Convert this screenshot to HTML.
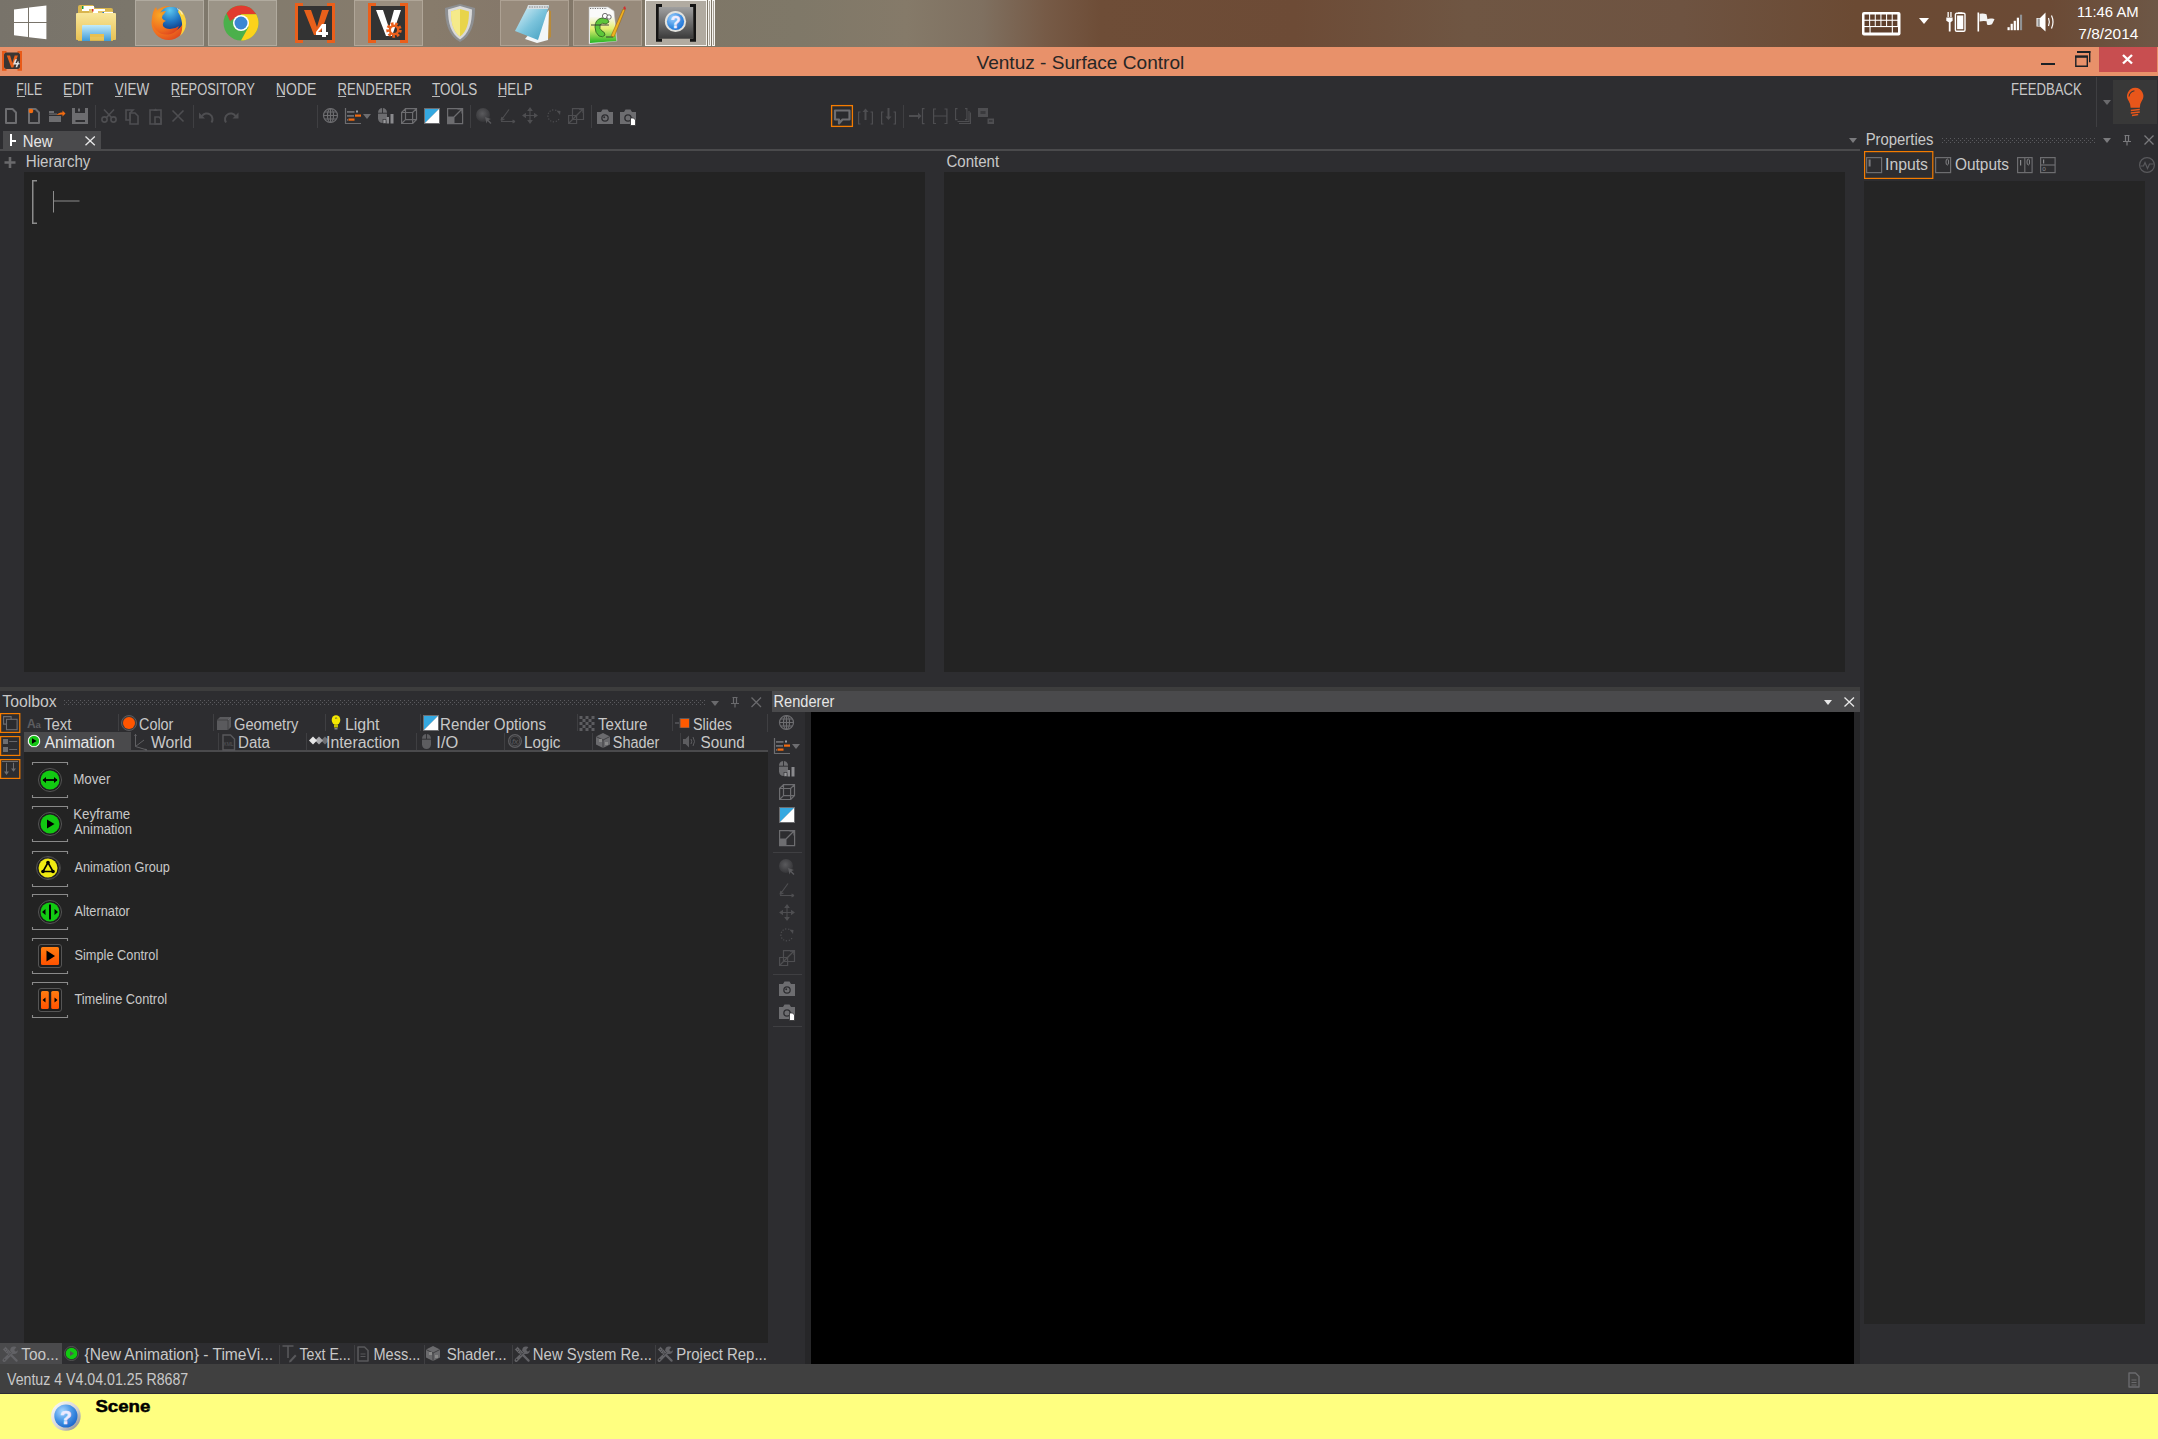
<!DOCTYPE html>
<html><head><meta charset="utf-8">
<style>
*{margin:0;padding:0;box-sizing:border-box}
html,body{width:2158px;height:1439px;overflow:hidden;background:#2d2d30;font-family:"Liberation Sans",sans-serif}
.a{position:absolute}
#ov{position:absolute;left:0;top:0}
text{font-family:"Liberation Sans",sans-serif;white-space:pre}
</style></head><body>
<div class="a" style="left:0px;top:0px;width:2158px;height:47px;background:linear-gradient(90deg,#78736a 0%,#7b766b 6%,#837b6d 13%,#877b6b 20%,#85786a 23.5%,#7e7667 31%,#7f7868 37%,#857a69 42%,#7f7060 45.5%,#765a46 48.5%,#6e4d37 51%,#6d4b36 60%,#6f5643 68%,#6e5341 78%,#6b4a33 86%,#6b4a35 95%,#6d5746 100%);"></div>
<div class="a" style="left:135px;top:0px;width:69px;height:46px;background:#9a9387;border:1px solid #b0aa9f"></div>
<div class="a" style="left:208px;top:0px;width:69px;height:46px;background:#9b9487;border:1px solid #b1ab9f"></div>
<div class="a" style="left:354px;top:0px;width:69px;height:46px;background:#9a8f80;border:1px solid #b0a698"></div>
<div class="a" style="left:500px;top:0px;width:69px;height:46px;background:#978a7b;border:1px solid #ada193"></div>
<div class="a" style="left:573px;top:0px;width:69px;height:46px;background:#978a7b;border:1px solid #ada193"></div>
<div class="a" style="left:645px;top:0px;width:62px;height:46px;background:#b1aba1;border:1.5px solid #f6f4f0"></div>
<div class="a" style="left:708px;top:0px;width:3px;height:46px;background:#a8a298;border:1px solid #f6f4f0"></div>
<div class="a" style="left:712px;top:0px;width:3px;height:46px;background:#a8a298;border:1px solid #f6f4f0"></div>
<div class="a" style="left:0px;top:47px;width:2158px;height:29px;background:#e8916a;"></div>
<div class="a" style="left:2099px;top:47px;width:58px;height:25px;background:#c84e50;"></div>
<div class="a" style="left:2041px;top:63px;width:14px;height:2px;background:#1c2126;"></div>
<div class="a" style="left:17px;top:96px;width:8px;height:1px;background:#b8b8b8;"></div>
<div class="a" style="left:64px;top:96px;width:8px;height:1px;background:#b8b8b8;"></div>
<div class="a" style="left:115px;top:96px;width:8px;height:1px;background:#b8b8b8;"></div>
<div class="a" style="left:172px;top:96px;width:8px;height:1px;background:#b8b8b8;"></div>
<div class="a" style="left:277px;top:96px;width:8px;height:1px;background:#b8b8b8;"></div>
<div class="a" style="left:338px;top:96px;width:8px;height:1px;background:#b8b8b8;"></div>
<div class="a" style="left:432px;top:96px;width:8px;height:1px;background:#b8b8b8;"></div>
<div class="a" style="left:498px;top:96px;width:8px;height:1px;background:#b8b8b8;"></div>
<div class="a" style="left:2096px;top:77px;width:1px;height:50px;background:#3f3f42;"></div>
<div class="a" style="left:2113px;top:80px;width:44px;height:44px;background:#383838;"></div>
<div class="a" style="left:95px;top:105px;width:1px;height:23px;background:#3f3f42;"></div>
<div class="a" style="left:193px;top:105px;width:1px;height:23px;background:#3f3f42;"></div>
<div class="a" style="left:317px;top:105px;width:1px;height:23px;background:#3f3f42;"></div>
<div class="a" style="left:470px;top:105px;width:1px;height:23px;background:#3f3f42;"></div>
<div class="a" style="left:591px;top:105px;width:1px;height:23px;background:#3f3f42;"></div>
<div class="a" style="left:903px;top:105px;width:1px;height:23px;background:#3f3f42;"></div>
<div class="a" style="left:3px;top:131px;width:98px;height:18px;background:#4a4a4c;"></div>
<div class="a" style="left:0px;top:149px;width:1860px;height:2px;background:#4a4a4c;"></div>
<div class="a" style="left:10px;top:134px;width:2px;height:12px;background:#ffffff;"></div>
<div class="a" style="left:12px;top:139.5px;width:4px;height:2px;background:#ffffff;"></div>
<div class="a" style="left:24px;top:172px;width:901px;height:500px;background:#232323;"></div>
<div class="a" style="left:944px;top:172px;width:901px;height:500px;background:#232323;"></div>
<div class="a" style="left:1864px;top:181px;width:281px;height:1143px;background:#252525;"></div>
<div class="a" style="left:0px;top:687px;width:1860px;height:4px;background:#3d3d3d;"></div>
<div class="a" style="left:24px;top:732px;width:106.6px;height:18px;background:#4a4a4c;"></div>
<div class="a" style="left:24px;top:750px;width:744px;height:2px;background:#4a4a4c;"></div>
<div class="a" style="left:118px;top:714px;width:1px;height:17px;background:#3f3f42;"></div>
<div class="a" style="left:213px;top:714px;width:1px;height:17px;background:#3f3f42;"></div>
<div class="a" style="left:325px;top:714px;width:1px;height:17px;background:#3f3f42;"></div>
<div class="a" style="left:420px;top:714px;width:1px;height:17px;background:#3f3f42;"></div>
<div class="a" style="left:577px;top:714px;width:1px;height:17px;background:#3f3f42;"></div>
<div class="a" style="left:672px;top:714px;width:1px;height:17px;background:#3f3f42;"></div>
<div class="a" style="left:767px;top:714px;width:1px;height:18px;background:#3f3f42;"></div>
<div class="a" style="left:218px;top:733px;width:1px;height:17px;background:#3f3f42;"></div>
<div class="a" style="left:306px;top:733px;width:1px;height:17px;background:#3f3f42;"></div>
<div class="a" style="left:416px;top:733px;width:1px;height:17px;background:#3f3f42;"></div>
<div class="a" style="left:504px;top:733px;width:1px;height:17px;background:#3f3f42;"></div>
<div class="a" style="left:592px;top:733px;width:1px;height:17px;background:#3f3f42;"></div>
<div class="a" style="left:680px;top:733px;width:1px;height:17px;background:#3f3f42;"></div>
<div class="a" style="left:24px;top:752px;width:744px;height:591px;background:#232323;"></div>
<div class="a" style="left:772px;top:691px;width:1088px;height:21px;background:#4a4a4c;"></div>
<div class="a" style="left:805px;top:712px;width:6px;height:652px;background:#262628;"></div>
<div class="a" style="left:811px;top:712px;width:1043px;height:652px;background:#000000;"></div>
<div class="a" style="left:1854px;top:712px;width:6px;height:652px;background:#262628;"></div>
<div class="a" style="left:773px;top:852px;width:29px;height:1px;background:#3f3f42;"></div>
<div class="a" style="left:773px;top:974px;width:29px;height:1px;background:#3f3f42;"></div>
<div class="a" style="left:773px;top:1026px;width:29px;height:1px;background:#3f3f42;"></div>
<div class="a" style="left:767px;top:714px;width:1px;height:18px;background:#3f3f42;"></div>
<div class="a" style="left:0px;top:1343px;width:62px;height:21px;background:#4a4a4c;"></div>
<div class="a" style="left:279px;top:1345px;width:1px;height:19px;background:#3f3f42;"></div>
<div class="a" style="left:354px;top:1345px;width:1px;height:19px;background:#3f3f42;"></div>
<div class="a" style="left:424px;top:1345px;width:1px;height:19px;background:#3f3f42;"></div>
<div class="a" style="left:512px;top:1345px;width:1px;height:19px;background:#3f3f42;"></div>
<div class="a" style="left:655px;top:1345px;width:1px;height:19px;background:#3f3f42;"></div>
<div class="a" style="left:0px;top:1364px;width:2158px;height:29px;background:#404040;"></div>
<div class="a" style="left:0px;top:1393px;width:2158px;height:1px;background:#2c2c32;"></div>
<div class="a" style="left:0px;top:1394px;width:2158px;height:45px;background:#ffff80;"></div>
<svg id="ov" width="2158" height="1439" viewBox="0 0 2158 1439">
<path fill="#fff" d="M14 9.5L28 7.8V22H14z M29 7.6L46.4 5.6V22H29z M14 23H28V37L14 35.3z M29 23H46.4V39.2L29 37.2z"/>
<g transform="translate(76,3)"><defs><linearGradient id="fold" x1="0" y1="0" x2="0" y2="1"><stop offset="0" stop-color="#f8e69a"/><stop offset="1" stop-color="#e8c255"/></linearGradient><linearGradient id="stand" x1="0" y1="0" x2="0" y2="1"><stop offset="0" stop-color="#c3ecfb"/><stop offset="1" stop-color="#3e9ad8"/></linearGradient></defs><path fill="#d9b54e" d="M2 4q0-2 2-2h13l2 3h16q2 0 2 2v31H2z"/><path fill="#fff" d="M6 3h12v5H6z"/><rect x="6" y="3" width="1.5" height="3" fill="#1d9a3a"/><path fill="#e3c464" d="M13 6h14l1 2h8v5H13z"/><path fill="#fff" d="M17 6h12v4H17z"/><rect x="16" y="6" width="1.5" height="2.5" fill="#d83020"/><path fill="#e3c464" d="M22 8h10l1 2h4v5H22z"/><path fill="#fff" d="M27 9h10v3H27z"/><rect x="26.5" y="9" width="1.5" height="2.5" fill="#2070d0"/><path fill="url(#fold)" d="M1 10h38q1 0 1 1v25q0 1-1 1H1q-1 0-1-1V11q0-1 1-1z"/><path fill="url(#stand)" d="M6 23q0-1 1-1h27q1 0 1 1v15H28v-5H14v5H6z"/><rect x="14" y="31" width="14" height="3" fill="#e8c050"/></g>
<g transform="translate(150,4)"><defs><radialGradient id="ffo" cx="0.3" cy="0.3" r="0.9"><stop offset="0" stop-color="#f9a825"/><stop offset="0.6" stop-color="#ef6c1e"/><stop offset="1" stop-color="#d9381e"/></radialGradient><radialGradient id="ffb" cx="0.45" cy="0.15" r="0.9"><stop offset="0" stop-color="#5cc8f0"/><stop offset="0.5" stop-color="#2277c4"/><stop offset="1" stop-color="#0c2e78"/></radialGradient></defs><circle cx="18.5" cy="19" r="17" fill="url(#ffo)"/><circle cx="21" cy="15" r="12.5" fill="url(#ffb)"/><path fill="url(#ffo)" d="M2 16q0-9 4-13 1 4 3 6 3-2 7-2l-2 3q-2 1-2 4 1 2 4 3-4 1-3 5 2 3 7 3 5 0 9-3-2 6-8 8-9 2-14-3-5-4-5-11z"/><path fill="#fcd33a" d="M29 5q7 5 7 14 0 8-6 13 3-6 2-13-1-7-4-11z"/><path fill="#fff" opacity="0.6" d="M27 4q4 2 6 6l-1 1q-2-4-5-6z"/></g>
<g transform="translate(222,4)"><circle cx="19" cy="19" r="17.5" fill="#4bb04b"/><path fill="#e23a2f" d="M19 1.5A17.5 17.5 0 0 1 34.2 10.3L19 10.3 8 17 4.6 9.3A17.5 17.5 0 0 1 19 1.5z"/><path fill="#fcd21b" d="M34.2 10.3A17.5 17.5 0 0 1 19 36.5L26.5 23 19 10.3z"/><circle cx="19" cy="19" r="8" fill="#fff"/><circle cx="19" cy="19" r="6.5" fill="#3c86d2"/></g>
<g transform="translate(294,2)"><rect x="3" y="4" width="36" height="34" fill="#333"/><path fill="#ea5f1b" d="M1 1h8v3H4v34h5v3H1z M41 1h-8v3h5v34h-5v3h8z"/><path fill="#e8601b" d="M10 8h7l6 17 5-17h7L26 33h-6z"/><path fill="#fff" d="M28 22h4v8h2v3h-2v2h-4v-2h-6v-3z M24 30h4v-4z"/></g>
<g transform="translate(367,2)"><rect x="3" y="4" width="36" height="34" fill="#333"/><path fill="#ea5f1b" d="M1 1h8v3H4v34h5v3H1z M41 1h-8v3h5v34h-5v3h8z"/><path fill="#fff" d="M9 8h7l6 18 5-18h7L25 34h-6z"/><circle cx="27" cy="28" r="6" fill="none" stroke="#ea5f1b" stroke-width="3.5" stroke-dasharray="2.5 1.6"/><circle cx="27" cy="28" r="4.2" fill="none" stroke="#ea5f1b" stroke-width="2.4"/></g>
<g transform="translate(443,2)"><path fill="#8d8f92" d="M17 2l15 4c0 16-4 28-15 34C6 34 2 22 2 6z"/><path fill="#d9d9d9" d="M17 4l12 3.5c0 14-3 24-12 30C8 31.5 5 21.5 5 7.5z"/><path fill="#e8d44a" d="M17 7l9 2.5c0 11-2 20-9 25C10 29.5 8 20.5 8 9.5z"/><path fill="#f5ea8a" d="M17 7v27.5C10 29.5 8 20.5 8 9.5z"/></g>
<g transform="translate(514,4)"><defs><linearGradient id="npb" x1="0" y1="0" x2="1" y2="1"><stop offset="0" stop-color="#e6f6fb"/><stop offset="0.5" stop-color="#7cc4dc"/><stop offset="1" stop-color="#3d9bbd"/></linearGradient></defs><path fill="#b88a3a" d="M34 6l3 1 0 26-3 2z"/><path fill="#f2f6f8" d="M35 6l-1 30-11 3 -12-4z"/><path fill="url(#npb)" d="M14 2h21L24 36 1 27z"/><path fill="#d8dde0" d="M14 1h21l-1 4H13z"/><path stroke="#777" stroke-width="0.8" d="M15 3h19" stroke-dasharray="1.5 1"/></g>
<g transform="translate(588,5)"><defs><linearGradient id="npp" x1="0" y1="0" x2="0" y2="1"><stop offset="0" stop-color="#f8f8f0"/><stop offset="0.45" stop-color="#e4ef70"/><stop offset="1" stop-color="#22b522"/></linearGradient></defs><path fill="#fafafa" stroke="#bbb" stroke-width="0.6" d="M1 2h19l6 4 3 30-28 3z"/><path fill="url(#npp)" d="M2 12h24l2.5 24L2 38z"/><path stroke="#666" stroke-width="0.9" stroke-dasharray="1.2 1.2" d="M2 3.5h17"/><path fill="#5cc63a" stroke="#2d5a1e" stroke-width="0.8" d="M7 22q0-8 7-9 6 0 7 4l-3 2q-4-2-6 1-1 4 2 6 3 1 3 4-2 3-6 1-4-3-4-9z"/><circle cx="17" cy="11" r="2.6" fill="#fff" stroke="#333" stroke-width="0.7"/><circle cx="21" cy="12" r="2.2" fill="#fff" stroke="#333" stroke-width="0.7"/><path stroke="#333" stroke-width="0.9" d="M3 20h18M18 32h7"/><path fill="#f0b020" stroke="#8a5a10" stroke-width="0.5" d="M23 31L35 4l2 1-11 27z"/><path fill="#d03030" d="M35 3l2-2 1 3-1 1z"/></g>
<g transform="translate(656,4)"><defs><linearGradient id="hg" x1="0" y1="0" x2="0" y2="1"><stop offset="0" stop-color="#a0a0a0"/><stop offset="1" stop-color="#3a3a3a"/></linearGradient><radialGradient id="hb" cx="0.35" cy="0.3" r="0.8"><stop offset="0" stop-color="#9fd0ff"/><stop offset="0.6" stop-color="#3f90e2"/><stop offset="1" stop-color="#1a6ed8"/></radialGradient></defs><rect x="3" y="3" width="34" height="31.7" fill="url(#hg)"/><path fill="#141414" d="M0 0h6v3H2.8v31.7H6v3H0z M40 0h-6v3h3.2v31.7H34v3h6z"/><circle cx="19.5" cy="17.5" r="10.6" fill="#e2e2de"/><circle cx="19.5" cy="17.5" r="8.6" fill="url(#hb)"/><text x="19.6" y="24" font-size="16" font-weight="bold" fill="#f0eeff" text-anchor="middle" stroke="#f0eeff" stroke-width="0.5">?</text></g>
<g transform="translate(1862,12)"><rect x="0" y="0" width="38.5" height="23.5" rx="2" fill="#fff"/><g fill="#5e3f2c"><rect x="2.50" y="2.50" width="4.6" height="5.2"/><rect x="2.50" y="8.80" width="4.6" height="5.2"/><rect x="8.15" y="2.50" width="4.6" height="5.2"/><rect x="8.15" y="8.80" width="4.6" height="5.2"/><rect x="13.80" y="2.50" width="4.6" height="5.2"/><rect x="13.80" y="8.80" width="4.6" height="5.2"/><rect x="19.45" y="2.50" width="4.6" height="5.2"/><rect x="19.45" y="8.80" width="4.6" height="5.2"/><rect x="25.10" y="2.50" width="4.6" height="5.2"/><rect x="25.10" y="8.80" width="4.6" height="5.2"/><rect x="30.75" y="2.50" width="4.6" height="5.2"/><rect x="30.75" y="8.80" width="4.6" height="5.2"/><rect x="2.5" y="15.1" width="5" height="5.4"/><rect x="8.6" y="15.1" width="21.2" height="5.4"/><rect x="30.9" y="15.1" width="5.1" height="5.4"/></g></g>
<g transform="translate(1919,18)"><path d="M0 0h10L5 6z" fill="#fff"/></g>
<g transform="translate(1946,12)"><path fill="#fff" d="M1.5 0h1.3v5H1.5z M4.3 0h1.3v5H4.3z M0.3 5.5h6.3v3.3l-2 1.5V19.5H2.8V10.3L0.3 8.8z"/><rect x="9.4" y="1.3" width="9.6" height="18" rx="1.3" fill="none" stroke="#fff" stroke-width="1.4"/><rect x="11.1" y="3.5" width="6.2" height="13.7" fill="#fff"/><rect x="12" y="0.3" width="4.4" height="1.2" fill="#fff"/></g>
<g transform="translate(1977,12)"><rect x="0.5" y="0.5" width="1.6" height="19" fill="#fff"/><path fill="#f2f2f2" d="M2.6 1.8Q6 0.8 9.5 2.2L10.5 7.2Q11.5 6.4 15.2 6.6Q16.6 6.9 17.5 7.2Q15.5 11.2 15 12.3Q12 13.5 10 12.4L9.6 9.2Q6 8.4 2.6 9.6z"/></g>
<g transform="translate(2007,14)"><g fill="#fff"><rect x="0.5" y="13.2" width="2.2" height="3"/><rect x="3.6" y="9.8" width="2.2" height="6.4"/><rect x="6.7" y="6.8" width="2.2" height="9.4"/><rect x="9.8" y="3.7" width="2.2" height="12.5"/></g><rect x="12.9" y="0.7" width="2.2" height="15.5" fill="#909294"/></g>
<g transform="translate(2036,12)"><path fill="#fff" d="M0.5 6h3.5l5.5-5.5v19l-5.5-5H0.5z"/><rect x="1.5" y="6.5" width="2.3" height="7.5" fill="#999"/><path d="M12.5 6q1.7 4 0 8 M15.5 3.5q3 6.5 0 13" fill="none" stroke="#fff" stroke-width="1.2"/></g>
<g transform="translate(0,46)"><path fill="#e85a18" d="M2 5h4.5v2H4v15.8h2.5v2H2z M22 5h-4.5v2H20v15.8h-2.5v2H22z"/><rect x="4" y="6.5" width="16" height="16.5" rx="2.5" fill="#3b3533"/><path fill="#e8601b" d="M6.8 9.5h3.3l2.2 7.5 2.4-7.5h3.2l-4.6 12h-2z"/><path fill="#e0e0e0" d="M15 13.5l2-0.5-1.5 4h1.5l0.5-1.5h1.5l-0.5 1.5h1v1.6h-1.4l-0.9 2.6h-1.6l0.9-2.6H13z"/></g>
<g transform="translate(2122,54)"><path d="M1 1L10 9.5M10 1L1 9.5" stroke="#fff" stroke-width="2.4"/></g>
<g transform="translate(2075,51)"><path d="M0.8 5.5h11.5v9.7H0.8z" fill="none" stroke="#1c2126" stroke-width="1.4"/><rect x="0" y="4.5" width="13" height="2.2" fill="#1c2126"/><path d="M2.5 0.8h12.2v10.5" fill="none" stroke="#1c2126" stroke-width="1.4"/><rect x="2" y="0" width="13.4" height="2" fill="#1c2126"/></g>
<g transform="translate(2103,100)"><path d="M0 0h8L4 5z" fill="#6a6a6d"/></g>
<g transform="translate(2125,87)"><path fill="#e8561a" d="M10.2 0.8A8.4 8.4 0 0 1 16.6 14.3Q15 16.5 14.8 20.8H5.6Q5.4 16.5 3.8 14.3A8.4 8.4 0 0 1 10.2 0.8z"/><path d="M4 9.5Q4.6 5 9.4 3.8" stroke="#383838" stroke-width="1.1" fill="none"/><path d="M5.8 23.6L14.8 22.6M5.8 26L14.8 25M7 28.4L13.2 27.6" stroke="#e8561a" stroke-width="1.5"/></g>
<g transform="translate(5,108)"><path d="M1 1h6.5L11 4.5V15H1z" fill="none" stroke="#6d6d70" stroke-width="2" stroke-linejoin="round"/></g>
<g transform="translate(28,108)"><path d="M1 1h6.5L11 4.5V15H1z" fill="none" stroke="#6d6d70" stroke-width="2" stroke-linejoin="round"/><circle cx="3" cy="3" r="2.3" fill="#f26b10"/></g>
<g transform="translate(49,108)"><rect x="0" y="3" width="5" height="2" fill="#6d6d70"/><rect x="0" y="5.5" width="8" height="1.2" fill="#6d6d70"/><rect x="0" y="8" width="12" height="6" fill="#6d6d70"/><path d="M7.5 7c2-2 4-2.5 6-2.5V2.5l3 3-3 3V6.5c-2 0-4 0.5-6 0.5z" fill="#f26b10"/></g>
<g transform="translate(72,108)"><path d="M0 0h16v16H0z" fill="#6d6d70"/><rect x="3" y="0" width="10" height="5" fill="#2d2d30"/><rect x="6" y="0.5" width="2" height="3" fill="#6d6d70"/><rect x="3.5" y="12" width="9.5" height="2" fill="#2d2d30"/></g>
<g transform="translate(101,109)"><g fill="none" stroke="#4e4e51" stroke-width="1.6"><circle cx="3.5" cy="10.5" r="2.6"/><circle cx="12.5" cy="10.5" r="2.6"/><path d="M5.5 8.5L13 0.5M10.5 8.5L3 0.5"/></g></g>
<g transform="translate(125,108)"><g fill="none" stroke="#4e4e51" stroke-width="1.6"><path d="M1 3v9h4V5l3-3H1z"/><path d="M5 5h5l3 3v8H5z"/></g></g>
<g transform="translate(149,108)"><g fill="none" stroke="#4e4e51" stroke-width="1.6"><path d="M1 2h11v14H1z"/><path d="M6 9h4l2 2v5H6z"/></g><path d="M4 3l2.5-2.5L9 3z" fill="#4e4e51"/></g>
<g transform="translate(172,110)"><path d="M0.5 0.5L11.5 11.5M11.5 0.5L0.5 11.5" stroke="#4e4e51" stroke-width="1.6"/></g>
<g transform="translate(199,110)"><path d="M3 6A5.5 5.5 0 1 1 12.5 12.5" fill="none" stroke="#4e4e51" stroke-width="2"/><path d="M0 2.5v6h6z" fill="#4e4e51"/></g>
<g transform="translate(223,110)"><path d="M12.5 6A5.5 5.5 0 1 0 3 12.5" fill="none" stroke="#4e4e51" stroke-width="2"/><path d="M15.5 2.5v6h-6z" fill="#4e4e51"/></g>
<g transform="translate(323,108)"><g fill="none" stroke="#6d6d70" stroke-width="1.2"><circle cx="7.5" cy="7.5" r="7"/><ellipse cx="7.5" cy="7.5" rx="3" ry="7"/><path d="M7.5 0.5v14M0.5 7.5h14M1.5 4h12M1.5 11h12"/></g></g>
<g transform="translate(345,108)"><path d="M0.5 0v15.5H16" fill="none" stroke="#6d6d70" stroke-width="1.2"/><rect x="2" y="3" width="7.5" height="1.8" fill="#6d6d70"/><rect x="11" y="2.5" width="2" height="2" fill="#9a9a9d"/><rect x="2" y="7" width="7" height="1.8" fill="#6d6d70"/><rect x="10" y="6.5" width="6" height="2.2" fill="#f26b10"/><rect x="2" y="11" width="1" height="1.8" fill="#6d6d70"/><rect x="3.5" y="10.5" width="6" height="2.2" fill="#f26b10"/><path d="M18 6h8l-4 5z" fill="#6d6d70"/></g>
<g transform="translate(378,108)"><path d="M4.5 0C2 0 0 2 0 4.5V10.5C0 13 2 15 4.5 15S9 13 9 10.5V4.5C9 2 7 0 4.5 0z" fill="#6d6d70"/><path d="M4.5 0v5M0 5.2h9" stroke="#2d2d30" stroke-width="0.9"/><rect x="5" y="11.5" width="3" height="4" fill="#9a9a9d" stroke="#2d2d30" stroke-width="0.6"/><rect x="8.5" y="9" width="2.5" height="6.5" fill="#8a8a8d"/><rect x="12.5" y="6" width="3" height="9.5" fill="#8a8a8d"/></g>
<g transform="translate(401,108)"><g fill="none" stroke="#6d6d70" stroke-width="1.2"><path d="M0.6 4.5h11v11H0.6z M4.5 0.6h11v11h-11z M0.6 4.5L4.5 0.6M11.6 4.5L15.5 0.6M0.6 15.5L4.5 11.6M11.6 15.5L15.5 11.6"/></g></g>
<g transform="translate(424,108)"><rect x="0" y="0" width="16" height="16" fill="#6d6d70"/><path d="M1 1h14L1 15z" fill="#35a8e0"/><path d="M15 1v14H1z" fill="#fff"/></g>
<g transform="translate(447,108)"><path d="M0.6 0.6h15v15h-15z" fill="none" stroke="#6d6d70" stroke-width="1.2"/><rect x="0" y="8.5" width="7.5" height="7.5" fill="#6d6d70"/><path d="M7 9L15 1M10.5 1H15v4.5" fill="none" stroke="#6d6d70" stroke-width="1.2"/></g>
<g transform="translate(476,108)"><defs><radialGradient id="sph" cx="0.45" cy="0.4" r="0.6"><stop offset="0" stop-color="#5a5a5d"/><stop offset="1" stop-color="#353538"/></radialGradient></defs><circle cx="7" cy="7" r="7" fill="url(#sph)"/><path d="M9 9l6 2-2.5 1 3 3-1 1-3-3-1 2.5z" fill="#5a5a5d"/></g>
<g transform="translate(500,109)"><path d="M1 11.5L9 0.5M1 12.5h14M1 11.5l1-3.5M1 11.5l3.5-1.5M15 12.5l-2.5-1.5M15 12.5l-2.5 1.5" fill="none" stroke="#4e4e51" stroke-width="1.2"/></g>
<g transform="translate(523,108)"><path d="M7 0v15M0 7.5h14M7 0l-1.8 2.5h3.6zM7 15l-1.8-2.5h3.6zM0 7.5l2.5-1.8v3.6zM14 7.5l-2.5-1.8v3.6z" fill="#4e4e51" stroke="#4e4e51" stroke-width="1.1"/></g>
<g transform="translate(546,109)"><path d="M12.5 3A6 6 0 1 0 13 10" fill="none" stroke="#4e4e51" stroke-width="1.2" stroke-dasharray="1.2 1.6"/><path d="M10.5 1.5l4 0.5-0.5 4z" fill="#4e4e51"/></g>
<g transform="translate(568,108)"><path d="M4.5 0.6H15.5V11.5H4.5z" fill="none" stroke="#4e4e51" stroke-width="1.2"/><path d="M0.6 7.5h8v8h-8z" fill="none" stroke="#4e4e51" stroke-width="1.2"/><path d="M1 15L15 1M11 1h4v4" fill="none" stroke="#4e4e51" stroke-width="1.3"/></g>
<g transform="translate(597,109)"><path d="M0 3h4l1.5-2.5h5L12 3h4v12H0z" fill="#6d6d70"/><circle cx="8" cy="9" r="3.8" fill="#2d2d30"/><circle cx="8" cy="9" r="2.5" fill="#6d6d70"/><circle cx="7.2" cy="8.2" r="1" fill="#2d2d30"/></g>
<g transform="translate(620,109)"><path d="M0 3h4l1.5-2.5h5L12 3h4v12H0z" fill="#6d6d70"/><circle cx="8" cy="9" r="3.8" fill="#2d2d30"/><circle cx="8" cy="9" r="2.5" fill="#6d6d70"/><path d="M10.5 9h3l2 2v5.5h-5z" fill="#fff" stroke="#2d2d30" stroke-width="0.8"/></g>
<g transform="translate(831,105)"><rect x="0.6" y="0.6" width="20.8" height="20.8" fill="#2a2b2e" stroke="#f57c00" stroke-width="1.3"/></g>
<g transform="translate(834,110)"><path d="M1 0.5h14.5v9H8.5L5 13.5V9.5H1z" fill="none" stroke="#6d6d70" stroke-width="2.2" stroke-linejoin="round"/></g>
<g transform="translate(858,108)"><path d="M2.5 4H0.6v12H2.5M12.5 4h1.9v12h-1.9" fill="none" stroke="#4e4e51" stroke-width="1.2"/><rect x="6.5" y="3" width="2" height="9" fill="#4e4e51"/><path d="M4.5 4L7.5 0.5 10.5 4z" fill="#4e4e51"/></g>
<g transform="translate(881,108)"><path d="M2.5 4H0.6v12H2.5M12.5 4h1.9v12h-1.9" fill="none" stroke="#4e4e51" stroke-width="1.2"/><rect x="6.5" y="0" width="2" height="9" fill="#4e4e51"/><path d="M4.5 8.5L7.5 12 10.5 8.5z" fill="#4e4e51"/></g>
<g transform="translate(909,108)"><rect x="0" y="7" width="10" height="2" fill="#4e4e51"/><path d="M9 4.5l3.5 3.5L9 11.5z" fill="#4e4e51"/><path d="M15.5 0.6h-2v15h2" fill="none" stroke="#4e4e51" stroke-width="1.2"/></g>
<g transform="translate(933,108)"><path d="M3 1H0.6v14.5H3M11.5 1h2.4v14.5h-2.4M0.6 8h13.3" fill="none" stroke="#4e4e51" stroke-width="1.2"/></g>
<g transform="translate(955,108)"><path d="M2.5 0.6H0.6v11H2.5M10 0.6h1.9v11H10M2.5 13.5h11.5V3M4 15.5h11.5V4.5" fill="none" stroke="#4e4e51" stroke-width="1.1"/></g>
<g transform="translate(978,108)"><rect x="0" y="0" width="10" height="9" fill="#4e4e51"/><rect x="2.5" y="3" width="5" height="3" fill="#2d2d30" opacity="0.6"/><rect x="9.5" y="10.5" width="6.5" height="5.5" fill="#4e4e51"/><rect x="11" y="12" width="3.5" height="2" fill="#2d2d30" opacity="0.6"/></g>
<g transform="translate(85,136)"><path d="M0.5 0.5L9.8 9.3M9.8 0.5L0.5 9.3" stroke="#e8e8e8" stroke-width="1.3"/></g>
<g transform="translate(1849,138)"><path d="M0 0h8L4 5z" fill="#7a7a7d"/></g>
<g transform="translate(4,157)"><path d="M6 0v11M0.5 5.5h11" stroke="#6a6a6c" stroke-width="2.6"/></g>
<g transform="translate(32,180)"><path d="M5 0.75H0.75V43.25H5" fill="none" stroke="#8c8c8c" stroke-width="1.5"/><path d="M21.5 11v21.5M21.5 21h26" fill="none" stroke="#8c8c8c" stroke-width="1"/></g>
<defs><pattern id="dots" width="4" height="4" patternUnits="userSpaceOnUse"><rect x="0" y="0" width="1" height="1" fill="#5a5a5e"/><rect x="2" y="2" width="1" height="1" fill="#5a5a5e"/></pattern></defs>
<rect x="1942" y="138" width="153" height="5" fill="url(#dots)"/>
<g transform="translate(2103,138)"><path d="M0 0h8L4 5z" fill="#7a7a7d"/></g>
<g transform="translate(2123,135)"><path d="M1.5 0.5h5M2.5 0.5v6M5.5 0.5v6M0 6.5h8M4 6.5v4" stroke="#7a7a7d" stroke-width="1.2" fill="none"/></g>
<g transform="translate(2144,135)"><path d="M0.5 0.5L9.5 9.5M9.5 0.5L0.5 9.5" stroke="#7a7a7d" stroke-width="1.3"/></g>
<g transform="translate(1864,151)"><rect x="0.6" y="0.6" width="68.2" height="26.8" fill="none" stroke="#f57c00" stroke-width="1.2"/></g>
<g transform="translate(1866,157)"><rect x="0.6" y="0.6" width="15" height="15" fill="none" stroke="#6d6d70" stroke-width="1.2"/><rect x="2.6" y="2.5" width="2" height="7" fill="#7a7a7d"/></g>
<g transform="translate(1935,157)"><rect x="0.6" y="0.6" width="15" height="15" fill="none" stroke="#6d6d70" stroke-width="1.2"/><ellipse cx="12.3" cy="5" rx="1.3" ry="3" fill="none" stroke="#8a8a8d" stroke-width="0.9"/></g>
<g transform="translate(2017,157)"><rect x="0.6" y="0.6" width="14.5" height="15" fill="none" stroke="#6d6d70" stroke-width="1.2"/><path d="M7.8 0.6v15" stroke="#6d6d70" stroke-width="1.2"/><rect x="3" y="3" width="1.2" height="5.5" fill="#8a8a8d"/><ellipse cx="11.3" cy="5" rx="1.3" ry="3" fill="none" stroke="#8a8a8d" stroke-width="0.9"/></g>
<g transform="translate(2040,157)"><rect x="0.6" y="0.6" width="14.5" height="15" fill="none" stroke="#6d6d70" stroke-width="1.2"/><path d="M0.6 8h14.5" stroke="#6d6d70" stroke-width="1.2"/><rect x="3" y="2.5" width="1.2" height="4" fill="#8a8a8d"/><text x="4" y="14" font-size="6.5" fill="#8a8a8d" text-anchor="middle">o</text></g>
<g transform="translate(2139,157)"><circle cx="8" cy="8" r="7.4" fill="none" stroke="#5a5a5d" stroke-width="1.2"/><path d="M1.5 9h3l1.5-3.5 2.5 6 2-4.5h4" fill="none" stroke="#5a5a5d" stroke-width="1.2"/></g>
<rect x="64" y="699" width="642" height="6" fill="url(#dots)"/>
<g transform="translate(711,701)"><path d="M0 0h8L4 5z" fill="#6a6a6d"/></g>
<g transform="translate(731,697)"><path d="M1.5 0.5h5M2.5 0.5v6M5.5 0.5v6M0 6.5h8M4 6.5v4" stroke="#6a6a6d" stroke-width="1.2" fill="none"/></g>
<g transform="translate(751,697)"><path d="M0.5 0.5L10 10M10 0.5L0.5 10" stroke="#6a6a6d" stroke-width="1.3"/></g>
<g transform="translate(0,713)"><rect x="0.6" y="0.6" width="19.2" height="18.8" fill="none" stroke="#f57c00" stroke-width="1.2"/></g>
<g transform="translate(0,736)"><rect x="0.6" y="0.6" width="19.2" height="18.8" fill="none" stroke="#f57c00" stroke-width="1.2"/></g>
<g transform="translate(0,759)"><rect x="0.6" y="0.6" width="19.2" height="18.8" fill="none" stroke="#f57c00" stroke-width="1.2"/></g>
<g transform="translate(3,716)"><path d="M0.6 0.6h7.5v7.5h-7.5z" fill="none" stroke="#6d6d70" stroke-width="1.1"/><rect x="3.5" y="3.3" width="10.6" height="10.4" fill="#2a2b2e" stroke="#6d6d70" stroke-width="1.1"/></g>
<g transform="translate(3,739)"><rect x="0" y="0" width="5" height="5" fill="#6d6d70"/><rect x="0" y="8" width="5" height="5" fill="#6d6d70"/><path d="M6.2 2.5h8M6.2 10.5h8" stroke="#6d6d70" stroke-width="0.9"/></g>
<g transform="translate(2,761)"><path d="M0 0.5h16M4.5 1.8v10M11.5 1.8v7" stroke="#6d6d70" stroke-width="1"/><path d="M2 10.5l2.5 3.5 2.5-3.5zM9 7.5l2.5 3.2 2.5-3.2z" fill="#6d6d70"/></g>
<g transform="translate(27,719)"><text x="0" y="9.3" font-size="12" font-weight="bold" fill="#5e5e61">A</text><text x="8.6" y="9.3" font-size="9.5" font-weight="bold" fill="#5e5e61">a</text></g>
<g transform="translate(121,715)"><circle cx="8" cy="8" r="7.5" fill="#3a3a3c" stroke="#5a5a5d" stroke-width="1"/><circle cx="8" cy="8" r="6" fill="#ff5500"/></g>
<g transform="translate(217,716)"><path d="M0 4l3-3h11v10l-3 3H0z" fill="#5a5a5d"/><path d="M0 4h11v10" fill="none" stroke="#3a3a3c" stroke-width="0.8"/><path d="M11 4l3-3" stroke="#6a6a6d" stroke-width="0.8"/></g>
<g transform="translate(331,715)"><ellipse cx="5" cy="5" rx="4.3" ry="4.8" fill="#f5e800"/><path d="M3 9.5h4v3H3z" fill="#c8c000"/><path d="M3.5 13h3v1.5h-3z" fill="#888"/><path d="M4 3.5q1-1.5 2.2 0" stroke="#444" stroke-width="0.8" fill="none"/></g>
<g transform="translate(423,715)"><rect x="0" y="0" width="16" height="16" fill="#6d6d70"/><path d="M1 1h14L1 15z" fill="#35a8e0"/><path d="M15 1v14H1z" fill="#fff"/></g>
<g fill="#5d5d60"><rect x="579.5" y="716" width="3" height="3"/><rect x="579.5" y="722" width="3" height="3"/><rect x="579.5" y="728" width="3" height="3"/><rect x="582.5" y="719" width="3" height="3"/><rect x="582.5" y="725" width="3" height="3"/><rect x="585.5" y="716" width="3" height="3"/><rect x="585.5" y="722" width="3" height="3"/><rect x="585.5" y="728" width="3" height="3"/><rect x="588.5" y="719" width="3" height="3"/><rect x="588.5" y="725" width="3" height="3"/><rect x="591.5" y="716" width="3" height="3"/><rect x="591.5" y="722" width="3" height="3"/><rect x="591.5" y="728" width="3" height="3"/></g>
<g transform="translate(675,716)"><path d="M0 7h4" stroke="#6d6d70" stroke-width="1"/><rect x="4.5" y="2" width="10" height="10" fill="#5a5a5d"/><rect x="5.5" y="3" width="8.5" height="8.5" fill="#ff5a00"/></g>
<g transform="translate(27,734)"><circle cx="7" cy="7" r="6.6" fill="#fff" stroke="#333" stroke-width="0.6"/><circle cx="7" cy="7" r="5.2" fill="#16c516"/><path d="M5 4.2v5.6L9.6 7z" fill="#000"/></g>
<g transform="translate(134,734)"><path d="M1.5 0v12.5L13 16M1.5 12.5L10 6" fill="none" stroke="#606063" stroke-width="1"/><path d="M0 2l1.5-2 1.5 2zM11.5 14.5l2 1.7-2.5 0.3z" fill="#606063"/></g>
<g transform="translate(222,734)"><path d="M1 1h7.5l4 4v11H1z" fill="none" stroke="#58585b" stroke-width="1.4"/><text x="6.5" y="12" font-size="5" fill="#58585b" text-anchor="middle">XML</text></g>
<g transform="translate(309,736)"><path d="M12 4.5l4-4 4 4-4 4z" fill="#6e6e71"/><path d="M6 4.5l4-4 4 4-4 4z" fill="#aaaaad"/><path d="M0 4.5l4-4 4 4-4 4z" fill="#e6e6e6"/></g>
<g transform="translate(422,734)"><path d="M4.5 0C2 0 0 2 0 4.5V10.5C0 13 2 15 4.5 15S9 13 9 10.5V4.5C9 2 7 0 4.5 0z" fill="#5d5d60"/><path d="M4.5 0v5M0 5.2h9" stroke="#2d2d30" stroke-width="0.9"/></g>
<g transform="translate(508,734)"><circle cx="7" cy="7" r="6.4" fill="none" stroke="#5d5d60" stroke-width="1.2"/><circle cx="7" cy="7" r="4.8" fill="none" stroke="#5d5d60" stroke-width="0.7"/><text x="7" y="10" font-size="8" font-style="italic" fill="#5d5d60" text-anchor="middle">fx</text></g>
<g transform="translate(596,733)"><path d="M7 0l7 3.5v8L7 15 0 11.5v-8z" fill="#6a6a6d"/><path d="M7 7l7-3.5M7 7L0 3.5M7 7v8" stroke="#3a3a3c" stroke-width="0.9"/><rect x="3" y="6" width="3" height="3" fill="#888"/><rect x="9" y="9" width="3" height="3" fill="#888"/></g>
<g transform="translate(683,735)"><path d="M0 4h2.5L6 0.5v12L2.5 9H0z" fill="#5d5d60"/><path d="M8 4q1.5 2.5 0 5M10 2q3 4.5 0 9" fill="none" stroke="#5d5d60" stroke-width="1"/></g>
<path d="M32.5 765V762.5H67.5V765M32.5 795V797.5H67.5V795" fill="none" stroke="#8a8a8a" stroke-width="1.1"/>
<path d="M32.5 809V806.5H67.5V809M32.5 839V841.5H67.5V839" fill="none" stroke="#8a8a8a" stroke-width="1.1"/>
<path d="M32.5 854V851.5H67.5V854M32.5 884V886.5H67.5V884" fill="none" stroke="#8a8a8a" stroke-width="1.1"/>
<path d="M32.5 897V894.5H67.5V897M32.5 927V929.5H67.5V927" fill="none" stroke="#8a8a8a" stroke-width="1.1"/>
<path d="M32.5 941V938.5H67.5V941M32.5 971V973.5H67.5V971" fill="none" stroke="#8a8a8a" stroke-width="1.1"/>
<path d="M32.5 985V982.5H67.5V985M32.5 1015V1017.5H67.5V1015" fill="none" stroke="#8a8a8a" stroke-width="1.1"/>
<g transform="translate(38,768)"><circle cx="12" cy="12" r="11.5" fill="#1e1e1e" stroke="#555" stroke-width="1"/><circle cx="12" cy="12" r="9.5" fill="#12c912"/><path d="M5 12h14" stroke="#000" stroke-width="1.8"/><path d="M4.5 12l3.5-3v6zM19.5 12L16 9v6z" fill="#000"/></g>
<g transform="translate(38,812)"><circle cx="12" cy="12" r="11.5" fill="#1e1e1e" stroke="#555" stroke-width="1"/><circle cx="12" cy="12" r="9.5" fill="#12c912"/><path d="M9 7.5v9l7.5-4.5z" fill="#000"/></g>
<g transform="translate(36,856)"><circle cx="12" cy="12" r="11.5" fill="#1e1e1e" stroke="#555" stroke-width="1"/><circle cx="14" cy="12" r="10.5" fill="none" stroke="#444" stroke-width="1"/><circle cx="12" cy="12" r="9.5" fill="#f0ea12"/><path d="M12 6.5L7 15.5h10z" fill="none" stroke="#000" stroke-width="1.6"/><circle cx="12" cy="6.5" r="1.8" fill="#000"/><circle cx="7" cy="15.5" r="1.8" fill="#000"/><circle cx="17" cy="15.5" r="1.8" fill="#000"/></g>
<g transform="translate(38,900)"><circle cx="12" cy="12" r="11.5" fill="#1e1e1e" stroke="#555" stroke-width="1"/><circle cx="12" cy="12" r="9.5" fill="#12c912"/><rect x="11" y="4.5" width="2" height="15" fill="#000"/><path d="M4 12l3.5-3v6zM20 12l-3.5-3v6z" fill="#000"/></g>
<g transform="translate(38,944)"><rect x="0.5" y="0.5" width="23" height="23" rx="2.5" fill="#1e1e1e" stroke="#555" stroke-width="1"/><defs><linearGradient id="og" x1="0" y1="0" x2="0" y2="1"><stop offset="0" stop-color="#ff7d10"/><stop offset="1" stop-color="#ff5200"/></linearGradient></defs><rect x="3" y="3" width="18" height="18" rx="1.5" fill="url(#og)"/><path d="M8.5 6.5v11L17 12z" fill="#000"/></g>
<g transform="translate(38,988)"><rect x="0.5" y="0.5" width="23" height="23" rx="2.5" fill="#1e1e1e" stroke="#555" stroke-width="1"/><rect x="3" y="3" width="7.8" height="18" rx="1.5" fill="url(#og)"/><rect x="13.2" y="3" width="7.8" height="18" rx="1.5" fill="url(#og)"/><path d="M4.5 12l3-2.5v5zM19.5 12l-3-2.5v5z" fill="#000"/></g>
<g transform="translate(1824,700)"><path d="M0 0h8L4 5z" fill="#e8e8e8"/></g>
<g transform="translate(1844,697)"><path d="M0.5 0.5L10 9.5M10 0.5L0.5 9.5" stroke="#e8e8e8" stroke-width="1.3"/></g>
<g transform="translate(779,715)"><g fill="none" stroke="#6d6d70" stroke-width="1.2"><circle cx="7.5" cy="7.5" r="7"/><ellipse cx="7.5" cy="7.5" rx="3" ry="7"/><path d="M7.5 0.5v14M0.5 7.5h14M1.5 4h12M1.5 11h12"/></g></g>
<g transform="translate(774,738)"><path d="M0.5 0v15.5H16" fill="none" stroke="#6d6d70" stroke-width="1.2"/><rect x="2" y="3" width="7.5" height="1.8" fill="#6d6d70"/><rect x="11" y="2.5" width="2" height="2" fill="#9a9a9d"/><rect x="2" y="7" width="7" height="1.8" fill="#6d6d70"/><rect x="10" y="6.5" width="6" height="2.2" fill="#f26b10"/><rect x="2" y="11" width="1" height="1.8" fill="#6d6d70"/><rect x="3.5" y="10.5" width="6" height="2.2" fill="#f26b10"/><path d="M18 6h8l-4 5z" fill="#6d6d70"/></g>
<g transform="translate(779,761)"><path d="M4.5 0C2 0 0 2 0 4.5V10.5C0 13 2 15 4.5 15S9 13 9 10.5V4.5C9 2 7 0 4.5 0z" fill="#6d6d70"/><path d="M4.5 0v5M0 5.2h9" stroke="#2d2d30" stroke-width="0.9"/><rect x="5" y="11.5" width="3" height="4" fill="#9a9a9d" stroke="#2d2d30" stroke-width="0.6"/><rect x="8.5" y="9" width="2.5" height="6.5" fill="#8a8a8d"/><rect x="12.5" y="6" width="3" height="9.5" fill="#8a8a8d"/></g>
<g transform="translate(779,784)"><g fill="none" stroke="#6d6d70" stroke-width="1.2"><path d="M0.6 4.5h11v11H0.6z M4.5 0.6h11v11h-11z M0.6 4.5L4.5 0.6M11.6 4.5L15.5 0.6M0.6 15.5L4.5 11.6M11.6 15.5L15.5 11.6"/></g></g>
<g transform="translate(779,807)"><rect x="0" y="0" width="16" height="16" fill="#6d6d70"/><path d="M1 1h14L1 15z" fill="#35a8e0"/><path d="M15 1v14H1z" fill="#fff"/></g>
<g transform="translate(779,830)"><path d="M0.6 0.6h15v15h-15z" fill="none" stroke="#6d6d70" stroke-width="1.2"/><rect x="0" y="8.5" width="7.5" height="7.5" fill="#6d6d70"/><path d="M7 9L15 1M10.5 1H15v4.5" fill="none" stroke="#6d6d70" stroke-width="1.2"/></g>
<g transform="translate(779,859)"><circle cx="7" cy="7" r="7" fill="url(#sph)"/><path d="M9 9l6 2-2.5 1 3 3-1 1-3-3-1 2.5z" fill="#5a5a5d"/></g>
<g transform="translate(779,883)"><path d="M1 11.5L9 0.5M1 12.5h14M1 11.5l1-3.5M1 11.5l3.5-1.5M15 12.5l-2.5-1.5M15 12.5l-2.5 1.5" fill="none" stroke="#4e4e51" stroke-width="1.2"/></g>
<g transform="translate(780,905)"><path d="M7 0v15M0 7.5h14M7 0l-1.8 2.5h3.6zM7 15l-1.8-2.5h3.6zM0 7.5l2.5-1.8v3.6zM14 7.5l-2.5-1.8v3.6z" fill="#4e4e51" stroke="#4e4e51" stroke-width="1.1"/></g>
<g transform="translate(779,928)"><path d="M12.5 3A6 6 0 1 0 13 10" fill="none" stroke="#4e4e51" stroke-width="1.2" stroke-dasharray="1.2 1.6"/><path d="M10.5 1.5l4 0.5-0.5 4z" fill="#4e4e51"/></g>
<g transform="translate(779,950)"><path d="M4.5 0.6H15.5V11.5H4.5z" fill="none" stroke="#4e4e51" stroke-width="1.2"/><path d="M0.6 7.5h8v8h-8z" fill="none" stroke="#4e4e51" stroke-width="1.2"/><path d="M1 15L15 1M11 1h4v4" fill="none" stroke="#4e4e51" stroke-width="1.3"/></g>
<g transform="translate(779,981)"><path d="M0 3h4l1.5-2.5h5L12 3h4v12H0z" fill="#6d6d70"/><circle cx="8" cy="9" r="3.8" fill="#2d2d30"/><circle cx="8" cy="9" r="2.5" fill="#6d6d70"/><circle cx="7.2" cy="8.2" r="1" fill="#2d2d30"/></g>
<g transform="translate(779,1004)"><path d="M0 3h4l1.5-2.5h5L12 3h4v12H0z" fill="#6d6d70"/><circle cx="8" cy="9" r="3.8" fill="#2d2d30"/><circle cx="8" cy="9" r="2.5" fill="#6d6d70"/><path d="M10.5 9h3l2 2v5.5h-5z" fill="#fff" stroke="#2d2d30" stroke-width="0.8"/></g>
<g transform="translate(2,1346)"><path d="M2.2 14.2L9.8 6.6" stroke="#626266" stroke-width="3.4" stroke-linecap="round"/><circle cx="12" cy="4.2" r="3.8" fill="#626266"/><path d="M12.2 4L14.6 0.8 17 3.4 13.8 5.8z" fill="#4a4a4c"/><circle cx="2.6" cy="13.6" r="0.8" fill="#4a4a4c"/><path d="M8.6 8.6L14.6 14.6" stroke="#626266" stroke-width="2.2" stroke-linecap="round"/><path d="M0.6 3.6L3.6 0.6 9.6 6.6 6.6 9.6z" fill="#626266" stroke="#4a4a4c" stroke-width="0.6"/><g fill="#4a4a4c" opacity="0.7"><rect x="3" y="3" width="0.9" height="0.9"/><rect x="5" y="3.6" width="0.9" height="0.9"/><rect x="4" y="5" width="0.9" height="0.9"/><rect x="6" y="5.6" width="0.9" height="0.9"/><rect x="5.4" y="7" width="0.9" height="0.9"/><rect x="7.2" y="6.8" width="0.9" height="0.9"/></g></g>
<g transform="translate(64,1346)"><circle cx="7.5" cy="7.5" r="7" fill="#2a2a2a" stroke="#555" stroke-width="1"/><circle cx="7.5" cy="7.5" r="5.8" fill="#12c912"/><path d="M6 5v5l4-2.5z" fill="#555"/></g>
<g transform="translate(282,1345)"><path d="M0.5 1h11M6 1v12" stroke="#58585b" stroke-width="1.6"/><path d="M7.5 15.5l5.5-6 1.5 1.5-5.5 6-2 0.5z" fill="#58585b"/></g>
<g transform="translate(357,1346)"><path d="M1 1h6.5L11 4.5V15H1z" fill="none" stroke="#58585b" stroke-width="1.6" stroke-linejoin="round"/><path d="M3.5 8h5M3.5 10.5h5" stroke="#58585b" stroke-width="1"/></g>
<g transform="translate(426,1346)"><path d="M7 0l7 3.5v8L7 15 0 11.5v-8z" fill="#6a6a6d"/><path d="M7 7l7-3.5M7 7L0 3.5M7 7v8" stroke="#3a3a3c" stroke-width="0.9"/><rect x="3" y="6" width="3" height="3" fill="#888"/><rect x="9" y="9" width="3" height="3" fill="#888"/></g>
<g transform="translate(514,1346)"><path d="M2.2 14.2L9.8 6.6" stroke="#626266" stroke-width="3.4" stroke-linecap="round"/><circle cx="12" cy="4.2" r="3.8" fill="#626266"/><path d="M12.2 4L14.6 0.8 17 3.4 13.8 5.8z" fill="#2d2d30"/><circle cx="2.6" cy="13.6" r="0.8" fill="#2d2d30"/><path d="M8.6 8.6L14.6 14.6" stroke="#626266" stroke-width="2.2" stroke-linecap="round"/><path d="M0.6 3.6L3.6 0.6 9.6 6.6 6.6 9.6z" fill="#626266" stroke="#2d2d30" stroke-width="0.6"/><g fill="#2d2d30" opacity="0.7"><rect x="3" y="3" width="0.9" height="0.9"/><rect x="5" y="3.6" width="0.9" height="0.9"/><rect x="4" y="5" width="0.9" height="0.9"/><rect x="6" y="5.6" width="0.9" height="0.9"/><rect x="5.4" y="7" width="0.9" height="0.9"/><rect x="7.2" y="6.8" width="0.9" height="0.9"/></g></g>
<g transform="translate(657,1346)"><path d="M2.2 14.2L9.8 6.6" stroke="#626266" stroke-width="3.4" stroke-linecap="round"/><circle cx="12" cy="4.2" r="3.8" fill="#626266"/><path d="M12.2 4L14.6 0.8 17 3.4 13.8 5.8z" fill="#2d2d30"/><circle cx="2.6" cy="13.6" r="0.8" fill="#2d2d30"/><path d="M8.6 8.6L14.6 14.6" stroke="#626266" stroke-width="2.2" stroke-linecap="round"/><path d="M0.6 3.6L3.6 0.6 9.6 6.6 6.6 9.6z" fill="#626266" stroke="#2d2d30" stroke-width="0.6"/><g fill="#2d2d30" opacity="0.7"><rect x="3" y="3" width="0.9" height="0.9"/><rect x="5" y="3.6" width="0.9" height="0.9"/><rect x="4" y="5" width="0.9" height="0.9"/><rect x="6" y="5.6" width="0.9" height="0.9"/><rect x="5.4" y="7" width="0.9" height="0.9"/><rect x="7.2" y="6.8" width="0.9" height="0.9"/></g></g>
<g transform="translate(2128,1372)"><path d="M1 1h6.5L11 4.5V15H1z" fill="none" stroke="#6a6a6d" stroke-width="1.4" stroke-linejoin="round"/><path d="M3.5 8h5M3.5 10.5h5M3.5 13h5" stroke="#6a6a6d" stroke-width="1"/></g>
<g transform="translate(51,1401)"><defs><radialGradient id="qb" cx="0.35" cy="0.3" r="0.75"><stop offset="0" stop-color="#a8d6ff"/><stop offset="0.55" stop-color="#4896e6"/><stop offset="1" stop-color="#1a66cc"/></radialGradient><linearGradient id="qr" x1="0" y1="0" x2="1" y2="1"><stop offset="0" stop-color="#ffffff"/><stop offset="0.6" stop-color="#d0d0d0"/><stop offset="1" stop-color="#808080"/></linearGradient></defs><circle cx="14.9" cy="15" r="14.8" fill="url(#qr)"/><circle cx="14.9" cy="15" r="11.6" fill="url(#qb)"/><text x="14.9" y="22.8" font-size="19" font-weight="bold" fill="#eceaff" text-anchor="middle" stroke="#eceaff" stroke-width="0.6">?</text></g>
<text x="2077.02" y="17" font-size="15" fill="#ffffff" font-weight="normal" textLength="61.66" lengthAdjust="spacingAndGlyphs" >11:46 AM</text>
<text x="2078.30" y="39" font-size="15" fill="#ffffff" font-weight="normal" textLength="60.05" lengthAdjust="spacingAndGlyphs" >7/8/2014</text>
<text x="976.50" y="68.7" font-size="19" fill="#262626" font-weight="normal" textLength="207.73" lengthAdjust="spacingAndGlyphs" >Ventuz - Surface Control</text>
<text x="16.13" y="94.9" font-size="16" fill="#c8c8c8" font-weight="normal" textLength="26.09" lengthAdjust="spacingAndGlyphs" >FILE</text>
<text x="62.91" y="94.9" font-size="16" fill="#c8c8c8" font-weight="normal" textLength="30.65" lengthAdjust="spacingAndGlyphs" >EDIT</text>
<text x="114.80" y="94.9" font-size="16" fill="#c8c8c8" font-weight="normal" textLength="34.35" lengthAdjust="spacingAndGlyphs" >VIEW</text>
<text x="170.69" y="94.9" font-size="16" fill="#c8c8c8" font-weight="normal" textLength="84.04" lengthAdjust="spacingAndGlyphs" >REPOSITORY</text>
<text x="275.72" y="94.9" font-size="16" fill="#c8c8c8" font-weight="normal" textLength="40.77" lengthAdjust="spacingAndGlyphs" >NODE</text>
<text x="337.58" y="94.9" font-size="16" fill="#c8c8c8" font-weight="normal" textLength="73.88" lengthAdjust="spacingAndGlyphs" >RENDERER</text>
<text x="432.00" y="94.9" font-size="16" fill="#c8c8c8" font-weight="normal" textLength="45.26" lengthAdjust="spacingAndGlyphs" >TOOLS</text>
<text x="497.67" y="94.9" font-size="16" fill="#c8c8c8" font-weight="normal" textLength="34.90" lengthAdjust="spacingAndGlyphs" >HELP</text>
<text x="2010.88" y="94.9" font-size="16" fill="#c8c8c8" font-weight="normal" textLength="70.85" lengthAdjust="spacingAndGlyphs" >FEEDBACK</text>
<text x="22.77" y="146.9" font-size="16" fill="#e6e6e6" font-weight="normal" textLength="29.82" lengthAdjust="spacingAndGlyphs" >New</text>
<text x="25.76" y="167" font-size="16" fill="#c8c8c8" font-weight="normal" textLength="64.64" lengthAdjust="spacingAndGlyphs" >Hierarchy</text>
<text x="946.40" y="167" font-size="16" fill="#c8c8c8" font-weight="normal" textLength="52.78" lengthAdjust="spacingAndGlyphs" >Content</text>
<text x="1865.67" y="144.9" font-size="16" fill="#c8c8c8" font-weight="normal" textLength="67.73" lengthAdjust="spacingAndGlyphs" >Properties</text>
<text x="1885.01" y="169.8" font-size="16" fill="#c8c8c8" font-weight="normal" textLength="42.99" lengthAdjust="spacingAndGlyphs" >Inputs</text>
<text x="1955.00" y="169.8" font-size="16" fill="#c8c8c8" font-weight="normal" textLength="54.00" lengthAdjust="spacingAndGlyphs" >Outputs</text>
<text x="2.30" y="706.7" font-size="16" fill="#c8c8c8" font-weight="normal" textLength="54.30" lengthAdjust="spacingAndGlyphs" >Toolbox</text>
<text x="44.00" y="729.6" font-size="16" fill="#c8c8c8" font-weight="normal" textLength="27.48" lengthAdjust="spacingAndGlyphs" >Text</text>
<text x="139.00" y="729.6" font-size="16" fill="#c8c8c8" font-weight="normal" textLength="34.40" lengthAdjust="spacingAndGlyphs" >Color</text>
<text x="234.00" y="729.6" font-size="16" fill="#c8c8c8" font-weight="normal" textLength="64.40" lengthAdjust="spacingAndGlyphs" >Geometry</text>
<text x="344.90" y="729.6" font-size="16" fill="#c8c8c8" font-weight="normal" textLength="34.54" lengthAdjust="spacingAndGlyphs" >Light</text>
<text x="440.05" y="729.6" font-size="16" fill="#c8c8c8" font-weight="normal" textLength="105.95" lengthAdjust="spacingAndGlyphs" >Render Options</text>
<text x="598.00" y="729.6" font-size="16" fill="#c8c8c8" font-weight="normal" textLength="49.50" lengthAdjust="spacingAndGlyphs" >Texture</text>
<text x="693.00" y="729.6" font-size="16" fill="#c8c8c8" font-weight="normal" textLength="39.00" lengthAdjust="spacingAndGlyphs" >Slides</text>
<text x="44.50" y="747.6" font-size="16" fill="#e8e8e8" font-weight="normal" textLength="70.39" lengthAdjust="spacingAndGlyphs" >Animation</text>
<text x="151.00" y="747.6" font-size="16" fill="#c8c8c8" font-weight="normal" textLength="40.89" lengthAdjust="spacingAndGlyphs" >World</text>
<text x="238.06" y="747.6" font-size="16" fill="#c8c8c8" font-weight="normal" textLength="31.85" lengthAdjust="spacingAndGlyphs" >Data</text>
<text x="326.01" y="747.6" font-size="16" fill="#c8c8c8" font-weight="normal" textLength="73.88" lengthAdjust="spacingAndGlyphs" >Interaction</text>
<text x="436.37" y="747.6" font-size="16" fill="#c8c8c8" font-weight="normal" textLength="21.88" lengthAdjust="spacingAndGlyphs" >I/O</text>
<text x="524.05" y="747.6" font-size="16" fill="#c8c8c8" font-weight="normal" textLength="36.45" lengthAdjust="spacingAndGlyphs" >Logic</text>
<text x="612.80" y="747.6" font-size="16" fill="#c8c8c8" font-weight="normal" textLength="46.59" lengthAdjust="spacingAndGlyphs" >Shader</text>
<text x="700.60" y="747.6" font-size="16" fill="#c8c8c8" font-weight="normal" textLength="44.26" lengthAdjust="spacingAndGlyphs" >Sound</text>
<text x="73.17" y="784.3" font-size="14.5" fill="#c8c8c8" font-weight="normal" textLength="37.37" lengthAdjust="spacingAndGlyphs" >Mover</text>
<text x="73.18" y="818.6" font-size="14.5" fill="#c8c8c8" font-weight="normal" textLength="56.98" lengthAdjust="spacingAndGlyphs" >Keyframe</text>
<text x="74.10" y="833.5" font-size="14.5" fill="#c8c8c8" font-weight="normal" textLength="57.86" lengthAdjust="spacingAndGlyphs" >Animation</text>
<text x="74.40" y="871.8" font-size="14.5" fill="#c8c8c8" font-weight="normal" textLength="95.56" lengthAdjust="spacingAndGlyphs" >Animation Group</text>
<text x="74.40" y="915.6" font-size="14.5" fill="#c8c8c8" font-weight="normal" textLength="55.45" lengthAdjust="spacingAndGlyphs" >Alternator</text>
<text x="74.40" y="959.8" font-size="14.5" fill="#c8c8c8" font-weight="normal" textLength="83.90" lengthAdjust="spacingAndGlyphs" >Simple Control</text>
<text x="74.40" y="1003.7" font-size="14.5" fill="#c8c8c8" font-weight="normal" textLength="92.70" lengthAdjust="spacingAndGlyphs" >Timeline Control</text>
<text x="773.59" y="707" font-size="16" fill="#e6e6e6" font-weight="normal" textLength="60.80" lengthAdjust="spacingAndGlyphs" >Renderer</text>
<text x="21.30" y="1360.4" font-size="16" fill="#c8c8c8" font-weight="normal" textLength="37.59" lengthAdjust="spacingAndGlyphs" >Too...</text>
<text x="84.50" y="1360.4" font-size="16" fill="#c8c8c8" font-weight="normal" textLength="188.60" lengthAdjust="spacingAndGlyphs" >{New Animation} - TimeVi...</text>
<text x="299.50" y="1359.9" font-size="16" fill="#c8c8c8" font-weight="normal" textLength="51.18" lengthAdjust="spacingAndGlyphs" >Text E...</text>
<text x="373.49" y="1359.9" font-size="16" fill="#c8c8c8" font-weight="normal" textLength="46.82" lengthAdjust="spacingAndGlyphs" >Mess...</text>
<text x="446.70" y="1359.9" font-size="16" fill="#c8c8c8" font-weight="normal" textLength="59.95" lengthAdjust="spacingAndGlyphs" >Shader...</text>
<text x="532.87" y="1359.9" font-size="16" fill="#c8c8c8" font-weight="normal" textLength="119.07" lengthAdjust="spacingAndGlyphs" >New System Re...</text>
<text x="676.37" y="1359.9" font-size="16" fill="#c8c8c8" font-weight="normal" textLength="90.48" lengthAdjust="spacingAndGlyphs" >Project Rep...</text>
<text x="7.00" y="1384.5" font-size="16" fill="#c8c8c8" font-weight="normal" textLength="181.21" lengthAdjust="spacingAndGlyphs" >Ventuz 4 V4.04.01.25 R8687</text>
<text x="95.40" y="1411.7" font-size="16" fill="#000000" font-weight="bold" textLength="54.88" lengthAdjust="spacingAndGlyphs" stroke="#000" stroke-width="0.5">Scene</text>
</svg>
</body></html>
